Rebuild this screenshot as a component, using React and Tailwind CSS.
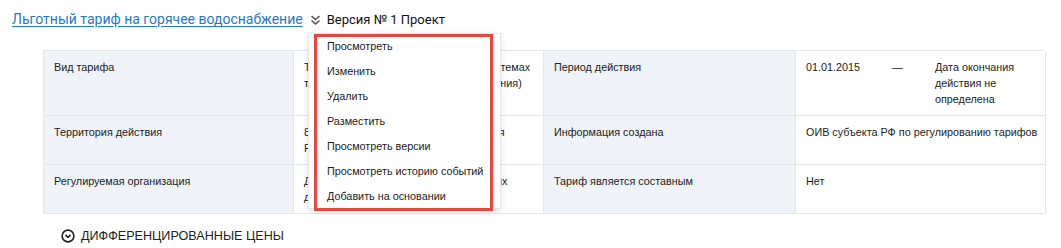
import React from "react";

const items = [
  "Просмотреть",
  "Изменить",
  "Удалить",
  "Разместить",
  "Просмотреть версии",
  "Просмотреть историю событий",
  "Добавить на основании",
];

function Label({ children }) {
  return (
    <div className="bg-[#eff3f7] border-r border-b border-[#e2e7ed] pt-2 pb-2 pl-[10px] pr-[10px]">
      {children}
    </div>
  );
}
function Value({ children, className = "" }) {
  return (
    <div className={"bg-white border-r border-b border-[#e2e7ed] pt-2 pb-2 pl-[10px] pr-[10px] " + className}>
      {children}
    </div>
  );
}

export default function App() {
  return (
    <div className="relative w-[1061px] h-[248px] bg-white text-[#222] overflow-hidden font-['Liberation_Sans',Arial,sans-serif]">
      <div className="flex items-center h-[40px] pl-[12px] pb-[1px] font-['Roboto','Liberation_Sans',sans-serif]">
        <a href="#" className="text-[14px] text-[#1f7bc2] underline underline-offset-2">
          Льготный тариф на горячее водоснабжение
        </a>
        <svg width="11" height="12" viewBox="0 0 11 12" className="ml-[7px] mr-[6px]" fill="none" stroke="#555" strokeWidth="1.6">
          <path d="M1.5 2 L5.5 5.5 L9.5 2" />
          <path d="M1.5 6.5 L5.5 10 L9.5 6.5" />
        </svg>
        <span className="text-[13px] text-[#111]">Версия № 1 Проект</span>
      </div>

      <div className="ml-[43px] mt-[10px] w-[1002px] grid grid-cols-[250px_250px_252px_250px] border-l border-t border-[#e2e7ed] text-[10.8px] leading-[16px]">
        <Label>Вид тарифа</Label>
        <Value className="whitespace-nowrap">
          Тариф на горячую воду в открытых системах
          <br />
          теплоснабжения (горячего водоснабжения)
        </Value>
        <Label>Период действия</Label>
        <Value>
          <div className="flex">
            <div className="w-[86px] shrink-0">01.01.2015</div>
            <div className="w-[43px] shrink-0">—</div>
            <div className="w-[100px]">Дата окончания действия не определена</div>
          </div>
        </Value>

        <Label>Территория действия</Label>
        <Value className="whitespace-nowrap">
          80000000 Муниципальные образования
          <br />
          Республика Башкортостан
        </Value>
        <Label>Информация создана</Label>
        <Value className="whitespace-nowrap">ОИВ субъекта РФ по регулированию тарифов</Value>

        <Label>Регулируемая организация</Label>
        <Value className="whitespace-nowrap">
          Договоры теплоснабжения – в закрытых
          <br />
          действующих системах
        </Value>
        <Label>Тариф является составным</Label>
        <Value>Нет</Value>
      </div>

      <div className="flex items-center ml-[61px] mt-[13px] text-[12.6px] text-[#222]">
        <svg width="14" height="14" viewBox="0 0 14 14" fill="none" stroke="#222" strokeWidth="1.6">
          <circle cx="7" cy="7" r="5.9" />
          <path d="M4.4 5.9 L7 8.4 L9.6 5.9" />
        </svg>
        <span className="ml-[6px]">ДИФФЕРЕНЦИРОВАННЫЕ ЦЕНЫ</span>
      </div>

      <div className="absolute left-[308px] top-[33px] w-[193px] h-[176px] bg-white border border-[#e3e6ea] shadow-[0_2px_6px_rgba(0,0,0,0.12)]" />
      <div className="absolute left-[314px] top-[34px] w-[179px] h-[177px] border-[3px] border-[#e8463f] pt-[1px] text-[10.8px] leading-[16px] text-[#222]">
        {items.map((t) => (
          <div key={t} className="pl-[10px] h-[25px] whitespace-nowrap">
            {t}
          </div>
        ))}
      </div>
    </div>
  );
}
